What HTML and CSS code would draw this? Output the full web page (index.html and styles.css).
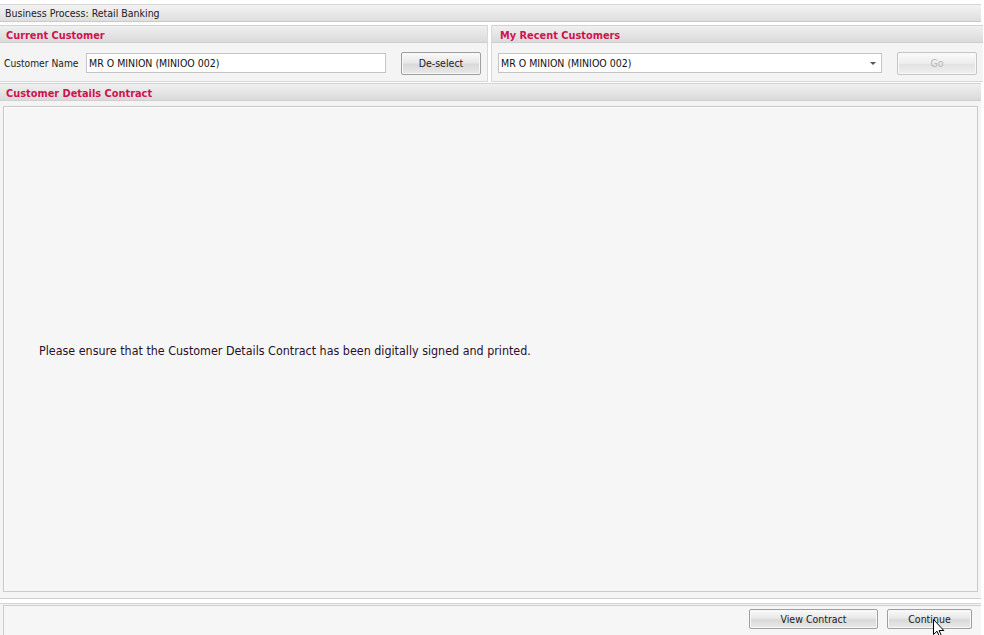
FILE: index.html
```html
<!DOCTYPE html>
<html>
<head>
<meta charset="utf-8">
<link rel="stylesheet" href="styles.css">
</head>
<body>
<div class="app">
  <div class="topbar">Business Process: Retail Banking</div>
  <div class="row">
    <div class="panel left">
      <div class="phead">Current Customer</div>
      <div class="pbody">
        <span class="label">Customer Name</span>
        <div class="input name">MR O MINION (MINIOO 002)</div>
        <div class="btn deselect">De-select</div>
      </div>
    </div>
    <div class="panel right">
      <div class="phead">My Recent Customers</div>
      <div class="pbody">
        <div class="input select">MR O MINION (MINIOO 002)<span class="arrow"></span></div>
        <div class="btn disabled">Go</div>
      </div>
    </div>
  </div>
  <div class="section">
    <div class="phead">Customer Details Contract</div>
    <div class="sbody">
      <div class="content">
        <p class="msg">Please ensure that the Customer Details Contract has been digitally signed and printed.</p>
      </div>
    </div>
  </div>
  <div class="footer">
    <div class="finner">
      <div class="btn wide">View Contract</div>
      <div class="btn cont">Continue
        <svg class="cursor" width="12" height="19" viewBox="0 0 12 19"><path d="M0.5 0.5 L0.5 15.5 L4 12.2 L6.6 18 L8.6 17.1 L6.1 11.5 L10.8 11.5 Z" fill="#fff" stroke="#000" stroke-width="1"/></svg>
      </div>
    </div>
  </div>
</div>
</body>
</html>
```
FILE: styles.css
```css
* { box-sizing: border-box; }
html, body { margin: 0; padding: 0; background: #ffffff; }
body {
  font-family: "DejaVu Sans Condensed", "DejaVu Sans", sans-serif;
  font-size: 11px;
  color: #1a1a1a;
  width: 984px;
  height: 635px;
  overflow: hidden;
}
.app { width: 981px; padding-top: 4px; display: flex; flex-direction: column; }
.topbar {
  height: 18px;
  border-top: 1px solid #d6d6d6;
  border-bottom: 1px solid #c9c9c9;
  background: linear-gradient(#f3f3f3, #dedede);
  padding-left: 5px;
  line-height: 16px;
  font-size: 10.5px;
  color: #222;
}
.row { display: flex; gap: 3px; margin-top: 3px; }
.panel { display: flex; flex-direction: column; background: #f4f4f4; }
.panel.left { width: 488px; border-right: 1px solid #d8d8d8; }
.panel.right { flex: 1; border-left: 1px solid #d8d8d8; }
.phead {
  height: 18px;
  background: linear-gradient(#f0f0f0, #dadada);
  border-top: 1px solid #d2d2d2;
  border-bottom: 1px solid #cfcfcf;
  color: #d1124f;
  font-weight: bold;
  font-size: 10.9px;
  line-height: 15px;
  padding: 2px 0 0 6px;
}
.right .phead { padding-left: 8px; }
.pbody {
  height: 39px;
  display: flex;
  align-items: center;
  padding: 2px 6px 0 4px;
  border-bottom: 1px solid #d6d6d6;
}
.right .pbody { padding-left: 6px; }
.label { font-size: 10.2px; width: 82px; color: #222; }
.input {
  height: 20px;
  background: #fff;
  border: 1px solid #c4c4c4;
  font-size: 10.5px;
  line-height: 19px;
  padding-left: 2px;
  color: #111;
}
.input.name { width: 300px; }
.input.select { width: 384px; position: relative; }
.arrow {
  position: absolute;
  right: 5px;
  top: 8px;
  width: 0; height: 0;
  border-left: 3px solid transparent;
  border-right: 3px solid transparent;
  border-top: 3px solid #555;
}
.btn {
  height: 23px;
  width: 80px;
  border: 1px solid #9f9f9f;
  border-radius: 2px;
  background: linear-gradient(#fafafa 0%, #e8e8e8 45%, #d9d9d9 55%, #e9e9e9 100%);
  text-align: center;
  line-height: 21px;
  font-size: 10.5px;
  color: #222;
  box-shadow: inset 0 0 0 1px #f8f8f8;
}
.deselect { margin-left: 15px; }
.disabled { margin-left: 15px; color: #b8b8b8; border-color: #c6c6c6; background: linear-gradient(#fbfbfb, #ececec 50%, #e3e3e3 55%, #efefef); }
.section { margin-top: 1px; display: flex; flex-direction: column; }
.sbody {
  background: #f4f4f4;
  height: 498px;
  padding: 5px 3px 6px 3px;
  border-bottom: 1px solid #cfcfcf;
}
.content {
  height: 100%;
  background: #f6f6f6;
  border: 1px solid #c9c9c9;
  box-shadow: inset 1px 1px 0 #fbfbfb;
  display: flex;
  align-items: center;
}
.msg {
  margin: 2px 0 0 35px;
  font-size: 12.4px;
  color: #2a0f2a;
}
.footer {
  margin-top: 4px;
  height: 40px;
  background: #f4f4f4;
  border-top: 1px solid #d4d4d4;
  padding: 1px 0 0 3px;
}
.finner {
  height: 100%;
  border: 1px solid #cdcdcd;
  border-right: none;
  border-bottom: none;
  background: #f6f6f6;
  display: flex;
  justify-content: flex-end;
  align-items: flex-start;
  padding: 3px 9px 0 0;
  gap: 9px;
}
.btn.wide { width: 129px; height: 20px; line-height: 18px; }
.btn.cont { width: 85px; height: 20px; line-height: 18px; position: relative; }
.cursor { position: absolute; left: 45px; top: 9px; }
```
